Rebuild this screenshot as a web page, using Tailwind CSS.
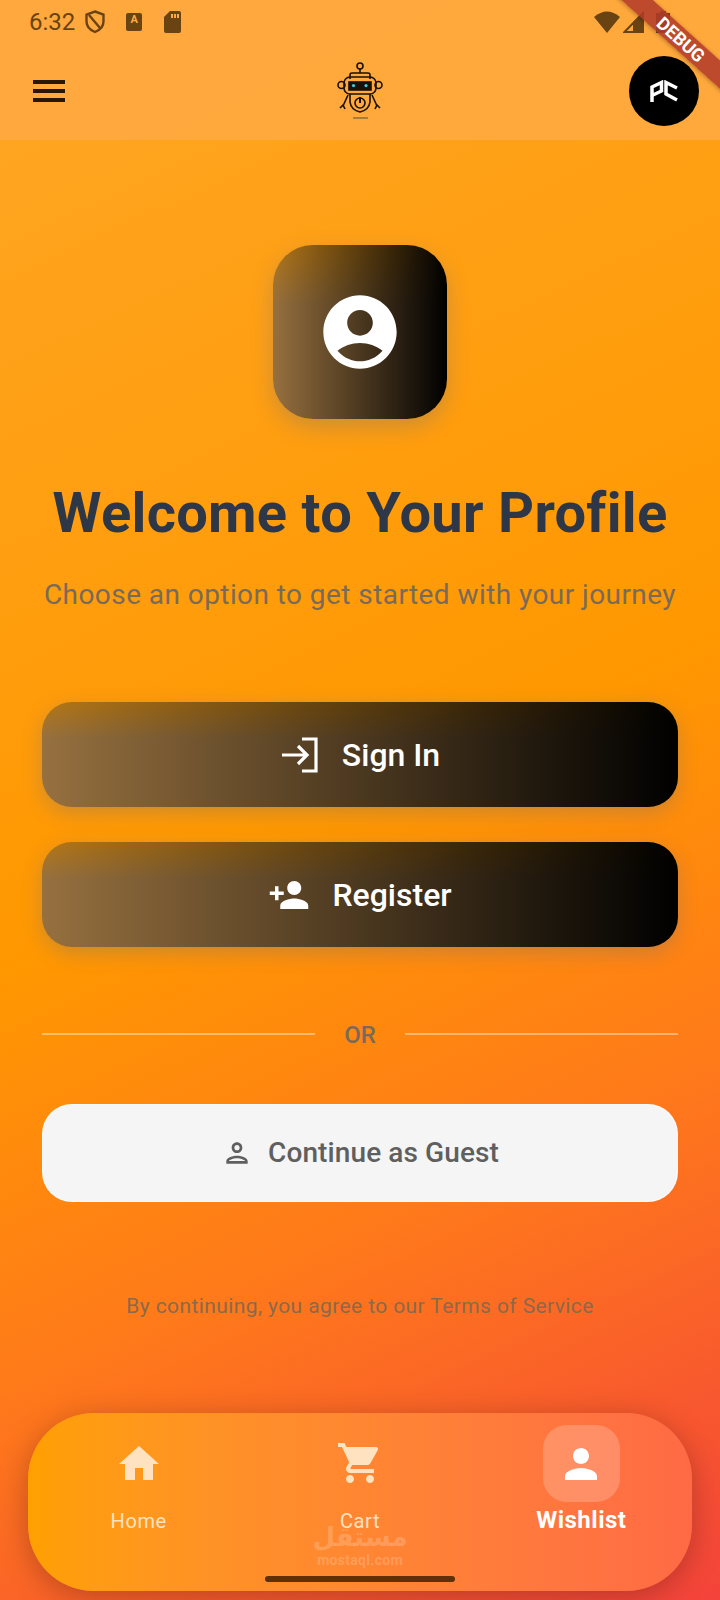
<!DOCTYPE html>
<html>
<head>
<meta charset="utf-8">
<script src="https://cdn.jsdelivr.net/npm/@tailwindcss/browser@4"></script>
<title>Profile</title>
</head>
<body class="font-['Roboto',sans-serif]">
<div class="relative w-[720px] h-[1600px] overflow-hidden flex flex-col bg-[linear-gradient(155deg,#ffa726_0%,#ff9800_50%,#ff7a1a_72%,#f4433b_100%)]">

    <!-- status bar + app bar -->
    <div class="h-[140px] bg-[#ffa940]/90 shrink-0">
        <div class="h-[44px] pl-[29px] pr-[50px] flex items-center text-[#694312]">
            <span class="text-[24px] leading-none">6:32</span>
            <svg class="ml-[10px]" width="20" height="24" viewBox="0 0 20 24" fill="none" stroke="#694312" stroke-width="2.4"><path d="M10 1.500 18.500 4.500v7c0 5-3.500 8.500-8.500 10.500-5-2-8.500-5.500-8.500-10.500v-7z"/><path d="M4 5l11 13"/></svg>
            <div class="ml-[21px] w-[16px] h-[18px] rounded-[2px] bg-[#694312] flex items-start justify-center text-[#ffa940] text-[11px] leading-[14px] font-bold">A</div>
            <svg class="ml-[22px]" width="17" height="22" viewBox="0 0 17 22"><path d="M6 0h9a2 2 0 0 1 2 2v18a2 2 0 0 1-2 2H2a2 2 0 0 1-2-2V6z" fill="#694312"/><path d="M7 3h2v4H7zM10 3h2v4h-2zM13 3h2v4h-2z" fill="#ffa940"/></svg>
            <div class="ml-auto flex items-center">
                <svg width="26" height="22" viewBox="0 0 26 22"><path d="M0 6Q13-5 26 6L13 22z" fill="#694312"/></svg>
                <svg class="ml-[3px]" width="21" height="22" viewBox="0 0 21 22"><path d="M1.500 21 20 2v19z" fill="none" stroke="#694312" stroke-width="2"/><path d="M10 11v10h10V2z" fill="#694312"/></svg>
                <svg class="ml-[12px]" width="14" height="22" viewBox="0 0 14 22"><path d="M4 0h6v2h4v20H0V2h4z" fill="#694312"/></svg>
            </div>
        </div>
        <div class="h-[94px] pl-[33px] pr-[21px] flex items-center justify-between">
            <div class="w-[58px]">
                <div class="w-[32px] flex flex-col gap-[5px]">
                    <span class="h-[4px] bg-[#2a1703]"></span>
                    <span class="h-[4px] bg-[#2a1703]"></span>
                    <span class="h-[4px] bg-[#2a1703]"></span>
                </div>
            </div>
            <svg class="mt-[2px]" width="46" height="60" viewBox="0 0 46 60" fill="none" stroke="#1a1006" stroke-width="1.600">
                <circle cx="23" cy="4" r="3"/><path d="M23 7v4"/>
                <path d="M13 17v-4q0-2 2-2h16q2 0 2 2v4"/>
                <rect x="7" y="15" width="32" height="17" rx="6"/>
                <circle cx="4.500" cy="23" r="3.500"/><circle cx="41.500" cy="23" r="3.500"/>
                <rect x="12" y="20" width="22" height="8" fill="#1a1006"/>
                <circle cx="16.500" cy="23.600" r="1.600" fill="#35d0e0" stroke="none"/><circle cx="29" cy="23.600" r="1.600" fill="#35d0e0" stroke="none"/>
                <path d="M13 32v8q1 8 10 10 9-2 10-10v-8"/>
                <circle cx="23" cy="41" r="5"/><path d="M23 35v6" stroke-width="2"/>
                <path d="M11 33 6 44M35 33l5 11M3 46l3-3 2 4M43 46l-3-3-2 4"/>
                <path d="M16 56h15" stroke="#8a6f3a" stroke-width="1.500"/>
            </svg>
            <div class="w-[70px] h-[70px] rounded-full bg-black flex items-center justify-center">
                <svg width="28" height="23" viewBox="0 0 28 23" fill="none" stroke="#fff" stroke-width="3.500"><path d="M2 22V7l9.500-4.500V11L3 15"/><path d="M27 8 16 2.500V14l11 6"/></svg>
            </div>
        </div>
    </div>

    <!-- main -->
    <div class="flex-1 px-[42px] flex flex-col items-center">
        <div class="mt-[105px] w-[174px] h-[174px] rounded-[40px] bg-[linear-gradient(90deg,transparent,#000),linear-gradient(180deg,#b57716,#96703f_35%)] shadow-[0_8px_22px_rgba(100,110,130,0.32)] flex items-center justify-center">
            <svg width="88" height="88" viewBox="0 0 24 24" fill="#fff"><path d="M12 2C6.480 2 2 6.480 2 12s4.480 10 10 10 10-4.480 10-10S17.520 2 12 2zm0 4c1.930 0 3.500 1.570 3.500 3.500S13.930 13 12 13s-3.500-1.570-3.500-3.500S10.070 6 12 6zm0 14c-2.030 0-4.430-.82-6.140-2.880C7.550 15.800 9.680 15 12 15s4.450.8 6.140 2.120C16.430 19.180 14.030 20 12 20z"/></svg>
        </div>
        <h1 class="mt-[62px] text-[56px] leading-[64px] tracking-[0.3px] font-bold text-[#2d3748] whitespace-nowrap">Welcome to Your Profile</h1>
        <p class="mt-[32px] text-[28px] leading-[36px] tracking-[0.43px] text-[#7a6a58] whitespace-nowrap">Choose an option to get started with your journey</p>

        <button class="mt-[89px] w-full h-[105px] rounded-[30px] bg-[linear-gradient(90deg,transparent,#000),linear-gradient(180deg,#b57716,#96703f_35%)] shadow-[0_6px_20px_rgba(100,110,130,0.32)] flex items-center justify-center gap-[22px] text-white text-[32px] font-medium">
            <svg width="40" height="40" viewBox="0 0 40 40" fill="none" stroke="#fff" stroke-width="3.200"><path d="M22 4h14v32H22"/><path d="M2 20h24M18 11l9 9-9 9"/></svg>
            Sign In
        </button>
        <button class="mt-[35px] w-full h-[105px] rounded-[30px] bg-[linear-gradient(90deg,transparent,#000),linear-gradient(180deg,#b57716,#96703f_35%)] shadow-[0_6px_20px_rgba(100,110,130,0.32)] flex items-center justify-center gap-[22px] text-white text-[32px] font-medium">
            <svg width="42" height="42" viewBox="0 0 24 24" fill="#fff"><path d="M15 12c2.210 0 4-1.790 4-4s-1.790-4-4-4-4 1.790-4 4 1.790 4 4 4zm-9-2V7H4v3H1v2h3v3h2v-3h3v-2H6zm9 4c-2.670 0-8 1.340-8 4v2h16v-2c0-2.660-5.330-4-8-4z"/></svg>
            Register
        </button>

        <div class="mt-[70px] w-full flex items-center">
            <div class="flex-1 h-[2px] -translate-y-px bg-white/40"></div>
            <span class="w-[90px] text-center text-[24px] font-medium text-[#7a6a58]">OR</span>
            <div class="flex-1 h-[2px] -translate-y-px bg-white/40"></div>
        </div>

        <button class="mt-[51px] w-full h-[98px] rounded-[30px] bg-[#f5f5f5] border border-white/60 flex items-center justify-center gap-[15px] text-[#5f5f5f] text-[28px] tracking-[0.1px] font-medium">
            <svg width="32" height="32" viewBox="0 0 24 24" fill="#5f5f5f"><path d="M12 6c1.100 0 2 .9 2 2s-.9 2-2 2-2-.9-2-2 .9-2 2-2m0 10c2.700 0 5.800 1.290 6 2H6c.23-.72 3.310-2 6-2m0-12C9.790 4 8 5.790 8 8s1.790 4 4 4 4-1.790 4-4-1.790-4-4-4zm0 10c-2.670 0-8 1.340-8 4v2h16v-2c0-2.660-5.330-4-8-4z"/></svg>
            Continue as Guest
        </button>

        <p class="mt-[90px] text-[21px] leading-[28px] tracking-[0.4px] text-[#8a6a4a] whitespace-nowrap">By continuing, you agree to our Terms of Service</p>
    </div>

    <!-- bottom nav -->
    <div class="absolute left-[28px] top-[1413px] w-[664px] h-[178px] rounded-[66px] bg-gradient-to-r from-[#ffa000] to-[#ff6a45] shadow-[0_6px_30px_rgba(0,0,0,0.25)] grid grid-cols-3">
        <div class="flex flex-col items-center pt-[27px] text-[#ffe3c0]">
            <svg width="48" height="48" viewBox="0 0 24 24" fill="#ffe3c0"><path d="M10 20v-6h4v6h5v-8h3L12 3 2 12h3v8z"/></svg>
            <span class="mt-[19px] text-[20px] leading-[28px] tracking-[0.6px]">Home</span>
        </div>
        <div class="flex flex-col items-center pt-[26px] text-[#ffe3c0]">
            <svg width="48" height="48" viewBox="0 0 24 24" fill="#ffe3c0"><path d="M7 18c-1.100 0-1.990.9-1.990 2S5.900 22 7 22s2-.9 2-2-.9-2-2-2zM1 2v2h2l3.600 7.590-1.350 2.450c-.16.28-.25.61-.25.96 0 1.100.9 2 2 2h12v-2H7.420c-.14 0-.25-.11-.25-.25l.03-.12.9-1.630h7.450c.75 0 1.410-.41 1.750-1.030l3.580-6.490A1 1 0 0 0 20 4H5.210l-.94-2H1zm16 16c-1.100 0-1.990.9-1.990 2s.89 2 1.990 2 2-.9 2-2-.9-2-2-2z"/></svg>
            <span class="mt-[20px] text-[20px] leading-[28px] tracking-[0.6px]">Cart</span>
        </div>
        <div class="flex flex-col items-center pt-[12px] text-white">
            <div class="w-[77px] h-[77px] rounded-[24px] bg-white/20 flex items-center justify-center">
                <svg width="48" height="48" viewBox="0 0 24 24" fill="#fff"><path d="M12 12c2.210 0 4-1.790 4-4s-1.790-4-4-4-4 1.790-4 4 1.790 4 4 4zm0 2c-2.670 0-8 1.340-8 4v2h16v-2c0-2.660-5.330-4-8-4z"/></svg>
            </div>
            <span class="mt-[4px] text-[24px] leading-[28px] font-bold tracking-[0.5px]">Wishlist</span>
        </div>
    </div>

    <!-- watermark -->
    <div class="absolute left-[300px] top-[1522px] w-[120px] flex flex-col items-center text-white/20 font-bold">
        <span class="font-['DejaVu_Sans',sans-serif] text-[26px] leading-[30px]">مستقل</span>
        <span class="text-[14px] leading-[16px] tracking-[0.3px]">mostaql.com</span>
    </div>

    <!-- gesture pill -->
    <div class="absolute left-[265px] top-[1576px] w-[190px] h-[6px] rounded-full bg-[#5f2f05]"></div>

    <!-- debug ribbon -->
    <div class="absolute left-[596px] top-[29px] w-[170px] h-[21px] rotate-[42deg] bg-[#b23a2a]/85 shadow-[0_1px_4px_rgba(0,0,0,0.3)] flex items-center justify-center text-white text-[18px] font-bold">DEBUG</div>
</div>
</body>
</html>
